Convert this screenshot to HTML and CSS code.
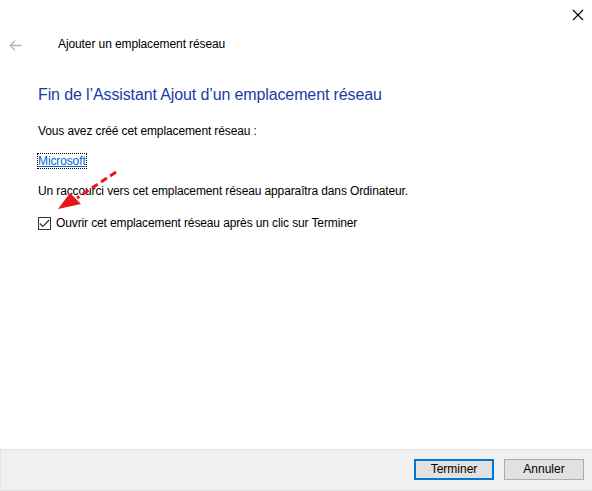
FILE: index.html
```html
<!DOCTYPE html>
<html lang="fr">
<head>
<meta charset="utf-8">
<link rel="stylesheet" href="styles.css">
</head>
<body>
<div class="window">
  <div class="titlebar">
    <svg class="close" width="12" height="12" viewBox="0 0 12 12"><path d="M1 1 L11 11 M11 1 L1 11" stroke="#000" stroke-width="1.1" fill="none"/></svg>
  </div>
  <div class="navbar">
    <svg class="back" width="13" height="11" viewBox="0 0 13 11"><path d="M6 0.8 L1.3 5.5 L6 10.2 M1.3 5.5 H12.5" stroke="#b4b4b4" stroke-width="1.3" fill="none"/></svg>
    <span class="navtitle">Ajouter un emplacement réseau</span>
  </div>
  <div class="content">
    <h1 class="heading">Fin de l’Assistant Ajout d’un emplacement réseau</h1>
    <p class="line">Vous avez créé cet emplacement réseau :</p>
    <p class="line linkline"><a class="link" href="#">Microsoft</a></p>
    <p class="line">Un raccourci vers cet emplacement réseau apparaîtra dans Ordinateur.</p>
    <label class="check">
      <span class="box"><svg width="11" height="9" viewBox="0 0 11 9"><path d="M0.8 4.5 L3.8 7.5 L10.2 1" stroke="#333" stroke-width="1.2" fill="none"/></svg></span>
      <span>Ouvrir cet emplacement réseau après un clic sur Terminer</span>
    </label>
  </div>
  <div class="footer">
    <button class="btn primary">Terminer</button>
    <button class="btn">Annuler</button>
  </div>
  <svg class="arrow" width="130" height="230" viewBox="0 0 130 230">
    <path d="M116 172 L77 198" stroke="#e8161b" stroke-width="3" stroke-dasharray="7 4" fill="none"/>
    <polygon points="58,209 70,193 81,204" fill="#e8161b"/>
  </svg>
</div>
</body>
</html>
```
FILE: styles.css
```css
* { box-sizing: border-box; }
html, body { margin: 0; padding: 0; background: #fff; }
body {
  font-family: "Liberation Sans", Arial, sans-serif;
  font-size: 12px;
  color: #000;
}
.window {
  position: relative;
  width: 592px;
  height: 491px;
  display: flex;
  flex-direction: column;
  background: #fff;
}
.titlebar {
  height: 30px;
  display: flex;
  justify-content: flex-end;
  padding: 9px 8px 0 0;
}
.close { display: block; }
.navbar {
  height: 30px;
  display: flex;
  align-items: center;
  padding-left: 9px;
}
.back { display: block; margin-right: 36px; }
.navtitle { font-size: 12px; color: #000; position: relative; top: -1px; letter-spacing: -0.1px; }
.content {
  flex: 1;
  padding: 24px 0 0 38px;
  letter-spacing: -0.12px;
}
.heading {
  margin: 0;
  font-weight: normal;
  font-size: 16px;
  color: #1a3aa8;
  line-height: 22px;
}
.line {
  margin: 0;
  line-height: 16px;
}
.heading + .line { margin-top: 17px; }
.linkline { margin-top: 14px; }
.link {
  color: #0066cc;
  text-decoration: underline;
  outline: 1px dotted #000;
  outline-offset: 0;
  padding: 0;
}
.linkline + .line { margin-top: 14px; }
.check {
  margin-top: 17px;
  display: flex;
  align-items: center;
  gap: 5px;
}
.box {
  width: 13px;
  height: 13px;
  border: 1px solid #333;
  display: flex;
  align-items: center;
  justify-content: center;
}
.box svg { display: block; }
.footer {
  height: 42px;
  background: #f0f0f0;
  border-top: 1px solid #dfdfdf;
  border-left: 1px solid #e3e3e3;
  border-bottom: 1px solid #e3e3e3;
  display: flex;
  justify-content: flex-end;
  align-items: flex-start;
  gap: 10px;
  padding: 9px 8px 0 0;
}
.btn {
  width: 80px;
  height: 21px;
  font-family: inherit;
  font-size: 12px;
  background: #e1e1e1;
  border: 1px solid #adadad;
  color: #000;
  padding: 0;
  line-height: 17px;
}
.btn.primary { border: 2px solid #0078d7; }
.arrow {
  position: absolute;
  left: 0;
  top: 0;
  pointer-events: none;
}
```
